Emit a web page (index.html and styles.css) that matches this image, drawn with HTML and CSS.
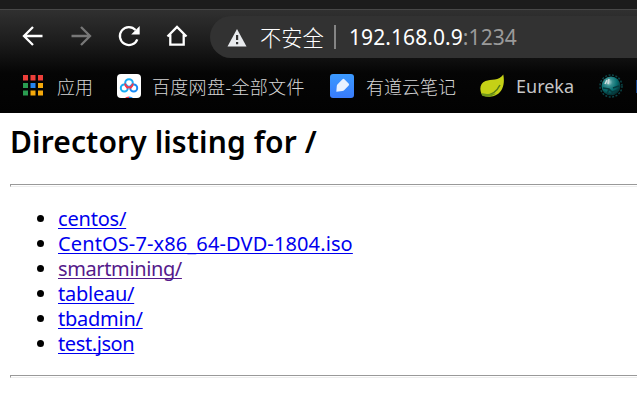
FILE: index.html
```html
<!DOCTYPE html>
<html lang="zh-CN">
<head>
<meta charset="utf-8">
<title>Directory listing for /</title>
<link rel="stylesheet" href="styles.css">
</head>
<body>
<header class="chrome">
  <div class="toolbar">
    <nav class="nav">
      <svg class="nav-icon" viewBox="0 0 24 24"><path d="M21.500 12H3M12 3 3 12l9 9"/></svg>
      <svg class="nav-icon disabled" viewBox="0 0 24 24"><path d="M2.500 12H21M12 3l9 9-9 9"/></svg>
      <svg class="nav-icon" viewBox="0 0 24 24"><path d="M20.300 15.300A9 9 0 1 1 18.600 6"/><path class="solid" d="M22.700 2v8.500h-8.500z"/></svg>
      <svg class="nav-icon" viewBox="0 0 24 24"><path d="M2.500 12.500 12 3l9.500 9.500M5.300 10.500v10.200h13.400V10.500"/></svg>
    </nav>
    <div class="omnibox">
      <svg class="warning" viewBox="0 0 20 18"><path fill="#e8eaed" d="M10 0 19.500 17.500H.5z"/><path fill="#323232" d="M9 6h2.200v5H9zM9 13h2.200v2.200H9z"/></svg>
      <span class="insecure">不安全</span>
      <span class="divider"></span>
      <span class="address"><span class="host">192.168.0.9</span><span class="port">:1234</span></span>
    </div>
  </div>
  <div class="bookmarks">
    <div class="bookmark apps">
      <svg class="grid-icon" viewBox="0 0 20 21"><path fill="#ed3f3a" d="M0 0h5v5.500H0zM7.500 0h5v5.500h-5zM15 0h5v5.500h-5z"/><path fill="#2a9c50" d="M0 8h5v5H0zM0 15.500h5v5H0z"/><path fill="#2583ef" d="M7.500 8h5v5h-5z"/><path fill="#f5a90b" d="M15 8h5v5h-5zM7.500 15.500h5v5h-5zM15 15.500h5v5h-5z"/></svg>
      <span class="label">应用</span>
    </div>
    <div class="bookmark pan">
      <svg class="favicon" viewBox="0 0 24 24"><rect width="24" height="24" rx="4" fill="#fff"/><g fill="none" stroke-width="2"><circle cx="7.300" cy="14" r="3.500" stroke="#16adf5"/><circle cx="16.700" cy="14" r="3.500" stroke="#1689f5"/><circle cx="12" cy="9" r="3.800" stroke="#17aaf5"/><path stroke="#f3374d" d="M8.200 9.500a3.800 3.800 0 0 0 7.600 0M8.500 11.300l2.400 3M15.500 11.300l-2.400 3"/></g><path fill="#f3374d" d="M8 24q1-1.500 4-1.500V24z"/><path fill="#1689f5" d="M12 22.500q3 0 4 1.500h-4z"/></svg>
      <span class="label">百度网盘-全部文件</span>
    </div>
    <div class="bookmark note">
      <svg class="favicon" viewBox="0 0 24 24"><defs><linearGradient id="blue" x2="0" y2="1"><stop stop-color="#3b9aff"/><stop offset="1" stop-color="#397bfb"/></linearGradient></defs><rect width="24" height="24" rx="3" fill="url(#blue)"/><path fill="#e9f1ff" d="M6.300 17.800 6.800 12q.1-1 .8-1.700L12.500 5.300q1-.9 2.100.1l4 4q1 1 .1 2.100l-4.600 4.800q-.7.700-1.700.8z"/></svg>
      <span class="label">有道云笔记</span>
    </div>
    <div class="bookmark eureka">
      <svg class="favicon" viewBox="0 0 24 24"><path fill="#c5d116" d="M23.300.5C25 9 23 17 17 20.500 12 23.500 6 23 2 21-1 15 0 9 5.500 7 11 5 19 7 23.300.5z"/><path fill="none" stroke="#557c16" stroke-width="1.500" d="M2 21c7 1 14-2 18-10"/><path fill="#6f971a" d="m1 19 6 1 9-.5c-4 3.500-9 4-13 2.500z"/></svg>
      <span class="label">Eureka</span>
    </div>
    <div class="bookmark globe">
      <svg class="favicon" viewBox="0 0 24 24"><defs><radialGradient id="orb" cx=".38" cy=".3" r=".7"><stop stop-color="#b2dada"/><stop offset=".28" stop-color="#398f90"/><stop offset=".6" stop-color="#087072"/><stop offset="1" stop-color="#042e30"/></radialGradient></defs><circle cx="12" cy="12" r="11" fill="none" stroke="#0b4548" stroke-width="1.500" stroke-dasharray="2 1.500"/><circle cx="12" cy="12" r="9.500" fill="url(#orb)"/><path fill="none" stroke="#063b3e" stroke-width="1.500" d="m4 14 6 1 3 3 7-2M8 20l2-5M13 18l1 3M14 14l6-2"/><path stroke="#d0dddd" stroke-width="1.500" d="m6 10 2-4M9 10l1-5"/></svg>
      <span class="label">D</span>
    </div>
  </div>
</header>
<main>
  <h2><span>Directory listing for /</span></h2>
  <hr>
  <ul>
    <li><a class="l1" href="#centos">centos/</a></li>
    <li><a class="l2" href="#iso">CentOS-7-x86_64-DVD-1804.iso</a></li>
    <li><a class="l3 visited" href="#smartmining">smartmining/</a></li>
    <li><a class="l4" href="#tableau">tableau/</a></li>
    <li><a class="l5" href="#tbadmin">tbadmin/</a></li>
    <li><a class="l6" href="#test">test.json</a></li>
  </ul>
  <hr>
</main>
</body>
</html>
```
FILE: styles.css
```css
* { box-sizing: border-box; }
body {
  margin: 0;
  overflow: hidden;
  background: #fff;
  color: #000;
  font-family: "Noto Sans", "Noto Sans CJK SC", sans-serif;
  font-size: 20px;
}
.chrome {
  height: 113px;
  overflow: hidden;
  border-top: 9px solid #1c1c1c;
  background: linear-gradient(#484848 0 1px, #303030 1px, #1d1d1d 32px, #050505 64px, #020202);
}
.toolbar { display: flex; height: 49px; padding-top: 7px; }
.nav { display: flex; gap: 24px; width: 210px; padding: 8px 0 0 21px; }
.nav-icon { flex: none; width: 24px; height: 24px; fill: none; stroke: #fff; stroke-width: 2.3; }
.disabled { stroke: #777; }
.solid { fill: #fff; stroke: none; }
.omnibox {
  display: flex;
  align-items: center;
  flex: 1;
  height: 42px;
  padding-left: 17px;
  border-radius: 21px 0 0 21px;
  background: #323232;
  white-space: nowrap;
}
.warning { width: 20px; height: 18px; margin-top: 1px; }
.insecure { width: 73px; margin-left: 13px; margin-right: 1px; font: 300 21.300px/42px "Noto Sans CJK SC", sans-serif; color: #fff; }
.divider { width: 2px; height: 24px; margin-right: 13px; margin-top: -1px; background: #858585; }
.address { font-size: 21px; line-height: 42px; letter-spacing: .08px; }
.host { color: #fff; }
.port { color: #9a9a9a; }
.bookmarks { display: flex; height: 55px; align-items: center; color: #d6d6d6; }
.bookmark { display: flex; flex: none; align-items: center; white-space: nowrap; }
.label { font: 300 18px/28px "Noto Sans CJK SC", sans-serif; }
.favicon { width: 24px; height: 24px; margin-right: 12px; }
.grid-icon { width: 20px; height: 21px; margin-right: 14px; }
.apps { width: 94px; margin-left: 23px; }
.pan { width: 213px; }
.pan .label { margin-left: -1px; letter-spacing: .3px; }
.note { width: 150px; }
.eureka { width: 119px; }
.eureka .label { font: 18px/28px "Noto Sans", sans-serif; color: #c6c6c6; }
.globe .label { font-family: "Noto Sans", sans-serif; }
main { padding-left: 10px; }
h2 { height: 41px; margin: 10px 0 20px; font-size: 30px; line-height: 37px; font-weight: 600; letter-spacing: .12px; white-space: nowrap; }
hr { height: 3px; margin: 0; border: 1px solid #ededed; border-top-color: #999; border-left-color: #999; border-right: 0; }
ul { margin: 19px 0 19px; padding-left: 48px; }
li { height: 25px; line-height: 25px; white-space: nowrap; }
a { color: #00e; text-decoration: underline; text-decoration-thickness: 1px; text-underline-offset: 2px; text-decoration-skip-ink: none; }
.l1 { letter-spacing: -.2px; }
.l2 { letter-spacing: .12px; }
.l3 { letter-spacing: -.38px; }
.l4 { letter-spacing: -.25px; }
.l5 { letter-spacing: -.25px; }
.l6 { letter-spacing: -.4px; }
.visited { color: #551a8b; }
```
